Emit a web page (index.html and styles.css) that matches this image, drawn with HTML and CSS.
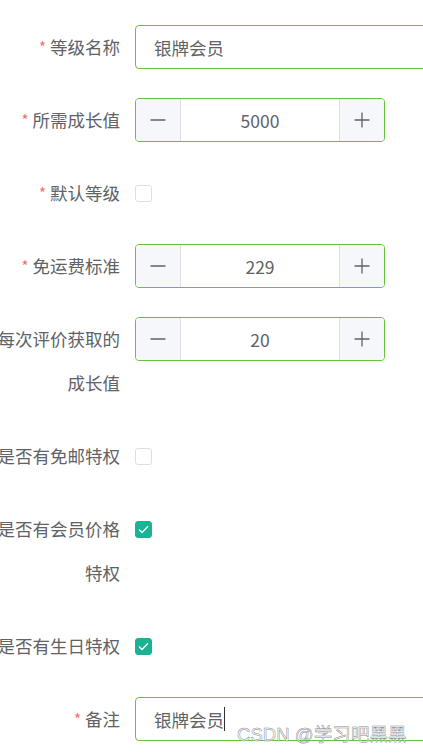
FILE: index.html
```html
<!DOCTYPE html>
<html lang="zh-CN">
<head>
<meta charset="utf-8">
<title>会员等级</title>
<link rel="stylesheet" href="styles.css">
</head>
<body>
<form class="form">
  <div class="item">
    <label class="label required">等级名称</label>
    <div class="control">
      <div class="input"><span class="val">银牌会员</span></div>
    </div>
  </div>
  <div class="item">
    <label class="label required">所需成长值</label>
    <div class="control">
      <div class="number">
        <span class="btn dec"><svg width="16" height="16" viewBox="0 0 16 16"><path d="M0.5 8H15.5" stroke="#606266" stroke-width="1.3"/></svg></span>
        <span class="num">5000</span>
        <span class="btn inc"><svg width="16" height="16" viewBox="0 0 16 16"><path d="M0.5 8H15.5M8 0.5V15.5" stroke="#606266" stroke-width="1.3"/></svg></span>
      </div>
    </div>
  </div>
  <div class="item">
    <label class="label required">默认等级</label>
    <div class="control"><span class="check"></span></div>
  </div>
  <div class="item">
    <label class="label required">免运费标准</label>
    <div class="control">
      <div class="number">
        <span class="btn dec"><svg width="16" height="16" viewBox="0 0 16 16"><path d="M0.5 8H15.5" stroke="#606266" stroke-width="1.3"/></svg></span>
        <span class="num">229</span>
        <span class="btn inc"><svg width="16" height="16" viewBox="0 0 16 16"><path d="M0.5 8H15.5M8 0.5V15.5" stroke="#606266" stroke-width="1.3"/></svg></span>
      </div>
    </div>
  </div>
  <div class="item">
    <label class="label">每次评价获取的成长值</label>
    <div class="control">
      <div class="number">
        <span class="btn dec"><svg width="16" height="16" viewBox="0 0 16 16"><path d="M0.5 8H15.5" stroke="#606266" stroke-width="1.3"/></svg></span>
        <span class="num">20</span>
        <span class="btn inc"><svg width="16" height="16" viewBox="0 0 16 16"><path d="M0.5 8H15.5M8 0.5V15.5" stroke="#606266" stroke-width="1.3"/></svg></span>
      </div>
    </div>
  </div>
  <div class="item">
    <label class="label">是否有免邮特权</label>
    <div class="control"><span class="check"></span></div>
  </div>
  <div class="item">
    <label class="label">是否有会员价格特权</label>
    <div class="control"><span class="check checked"><svg width="11" height="9" viewBox="0 0 11 9"><path d="M1 4.5L4 7.5L10 1.2" fill="none" stroke="#fff" stroke-width="1.3"/></svg></span></div>
  </div>
  <div class="item">
    <label class="label">是否有生日特权</label>
    <div class="control"><span class="check checked"><svg width="11" height="9" viewBox="0 0 11 9"><path d="M1 4.5L4 7.5L10 1.2" fill="none" stroke="#fff" stroke-width="1.3"/></svg></span></div>
  </div>
  <div class="item">
    <label class="label required">备注</label>
    <div class="control">
      <div class="input"><span class="val">银牌会员</span><span class="caret"></span></div>
    </div>
  </div>
</form>
<div class="watermark">CSDN @学习吧黑黑</div>
</body>
</html>
```

FILE: styles.css
```css
html, body {
  margin: 0;
  padding: 0;
  background: #fff;
  overflow: hidden;
  width: 423px;
  height: 755px;
}
body {
  position: relative;
  font-family: "Noto Sans CJK SC", "Noto Sans", sans-serif;
  font-size: 17.5px;
  color: #606266;
}
.form {
  margin: 0 0 0 -5px;
  padding-top: 25px;
  width: 500px;
}
.item {
  display: flex;
  margin-bottom: 29px;
}
.label {
  width: 140px;
  flex-shrink: 0;
  box-sizing: border-box;
  padding-right: 15px;
  text-align: right;
  line-height: 44px;
  color: #606266;
}
.required::before {
  content: "*";
  color: #f56c6c;
  margin-right: 4px;
  font-size: 15px;
  vertical-align: top;
}
.control {
  flex: 1;
  height: 44px;
  display: flex;
  align-items: center;
}
.input {
  box-sizing: border-box;
  width: 320px;
  height: 44px;
  border: 1px solid #67c23a;
  border-radius: 4px;
  padding-left: 18px;
  display: flex;
  align-items: center;
  color: #606266;
}
.caret {
  width: 1px;
  height: 24px;
  background: #303133;
}
.number {
  box-sizing: border-box;
  width: 250px;
  height: 44px;
  border: 1px solid #67c23a;
  border-radius: 4px;
  display: flex;
  overflow: hidden;
}
.btn {
  width: 44px;
  background: #f5f7fa;
  display: flex;
  align-items: center;
  justify-content: center;
}
.dec {
  border-right: 1px solid #dcdfe6;
}
.inc {
  border-left: 1px solid #dcdfe6;
}
.num {
  flex: 1;
  display: flex;
  align-items: center;
  justify-content: center;
  color: #606266;
}
.check {
  box-sizing: border-box;
  width: 17px;
  height: 17px;
  border: 1px solid #dcdfe6;
  border-radius: 3px;
  background: #fff;
  display: flex;
  align-items: center;
  justify-content: center;
}
.check.checked {
  background: #1ab394;
  border-color: #1ab394;
}
.watermark {
  position: absolute;
  left: 237px;
  top: 723px;
  font-family: "Liberation Sans", "Noto Sans CJK SC", sans-serif;
  font-size: 18.6px;
  color: rgba(255, 255, 255, 0.75);
  -webkit-text-stroke: 0.5px #8a8a8a;
  white-space: nowrap;
  line-height: 24px;
}
```
